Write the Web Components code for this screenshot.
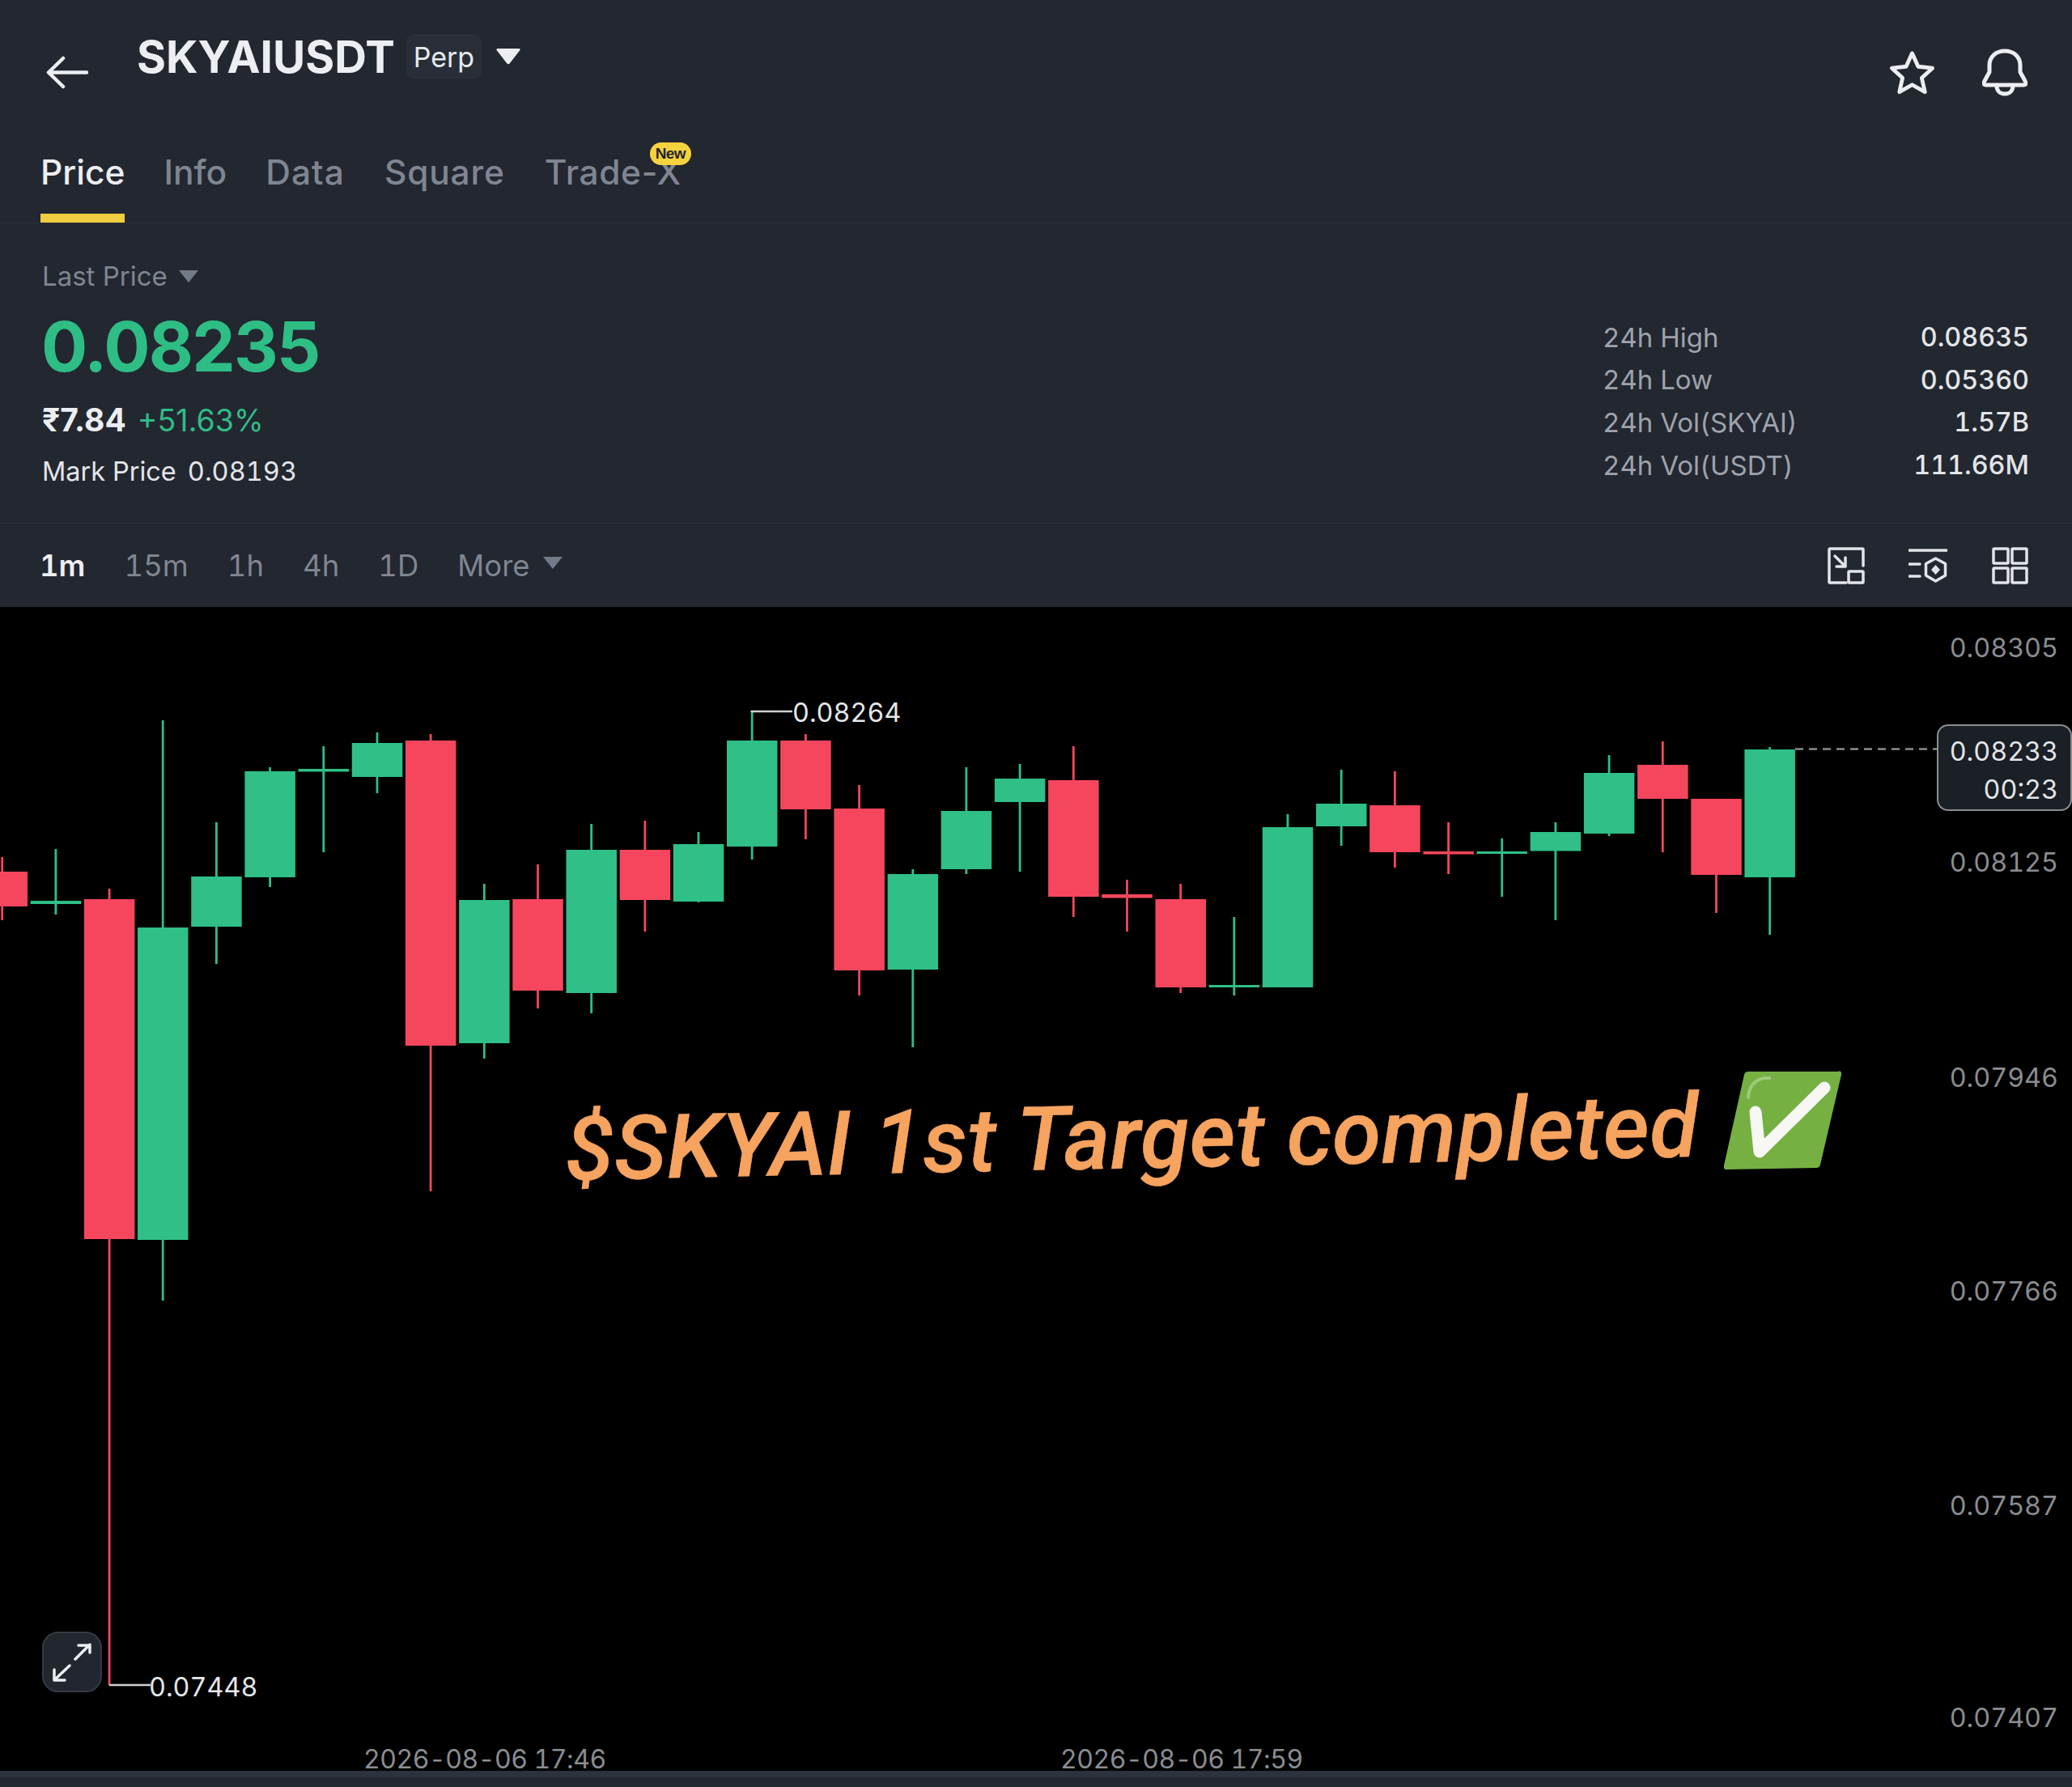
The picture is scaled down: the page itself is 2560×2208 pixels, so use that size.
<!DOCTYPE html>
<html lang="en">
<head>
<meta charset="utf-8">
<title>SKYAIUSDT Perp</title>
<style>
  html, body { margin: 0; padding: 0; background: #232730; }
  body { width: 2560px; height: 2208px; overflow: hidden; display: flex; flex-direction: column; font-family: Inter, "Liberation Sans", sans-serif; color: #eaecef; }
</style>
</head>
<body>
<top-bar></top-bar>
<tab-bar></tab-bar>
<price-panel></price-panel>
<time-bar></time-bar>
<k-chart></k-chart>
<bottom-strip></bottom-strip>
<script>
function def(name, html) {
  customElements.define(name, class extends HTMLElement {
    constructor() {
      super();
      this.attachShadow({ mode: 'open' }).innerHTML = typeof html === 'function' ? html() : html;
    }
  });
}

def('top-bar', `<style>
  :host { display: flex; height: 160px; flex: none; align-items: flex-start; padding: 0 55px 0 57px; box-sizing: border-box; }
  svg { display: block; fill: none; stroke: #eceef1; stroke-linecap: round; stroke-linejoin: round; }
  .back { margin-top: 69px; margin-right: 60px; }
  h1 { margin: 42px 14px 0 0; font: 700 55px/56px Inter, sans-serif; color: #eceef1; letter-spacing: 0; }
  .perp { margin-top: 43px; padding-top: 2px; height: 54px; width: 93px; box-sizing: border-box; display: flex; align-items: center; justify-content: center; border-radius: 9px; background: #282d37; border: 1px solid #2f343e; font: 400 34px/1 Inter, sans-serif; color: #e6e8eb; }
  .tri { margin: 60px 0 0 18px; }
  .acts { margin-left: auto; display: flex; gap: 58px; align-items: flex-start; }
  .star { margin-top: 62px; }
  .bell { margin-top: 60px; }
</style>
<svg class="back" width="52" height="42" viewBox="0 0 52 42" stroke-width="4.500"><path d="M50 20.500H3M21 3 3 20.500 21 38"/></svg>
<h1>SKYAIUSDT</h1>
<div class="perp">Perp</div>
<svg class="tri" width="30" height="20" viewBox="0 0 30 20" style="stroke:none"><path fill="#eceef1" d="M2 0H28Q30.500 0 29 2.500L17 18Q15 20.500 13 18L1 2.500Q-.5 0 2 0Z"/></svg>
<div class="acts">
<svg class="star" width="57" height="55" viewBox="0 0 59 57" stroke-width="5"><path d="M29.500 4 37.200 21 55.500 23 41.800 35.500 45.800 53.500 29.500 44.300 13.200 53.500 17.200 35.500 3.500 23 21.800 21Z"/></svg>
<svg class="bell" width="56" height="60" viewBox="0 0 56 60" stroke-width="5"><path d="M9 29V21C9 10 17 3 28 3S47 10 47 21V29L53 40Q55.500 45 51 45H5Q.5 45 3 40Z"/><path d="M18 46C18 52 22 56 28 56S38 52 38 46"/></svg>
</div>`);

def('tab-bar', `<style>
  :host { display: flex; height: 116px; flex: none; gap: 48px; padding-left: 50px; box-sizing: border-box; border-bottom: 1px solid #2c3039; align-items: stretch; }
  .t { position: relative; height: 104px; padding-top: 27px; box-sizing: border-box; font: 500 42.500px/52px Inter, sans-serif; color: #7f8691; }
  .on { color: #eceef1; }
  .on::after { content: ""; position: absolute; left: 0; right: 0; bottom: -11px; height: 11px; background: #f0cc3f; }
  .w1 { letter-spacing: 1px; }
  .w2 { letter-spacing: .8px; margin-left: 1px; }
  .w3 { letter-spacing: .6px; margin-left: 1px; }
  .new { position: absolute; right: -12px; top: 16px; width: 51px; height: 28px; border-radius: 14px; background: #f6d23f; color: #23262c; font: 600 19px/28px "Liberation Sans", sans-serif; text-align: center; letter-spacing: -0.6px; }
</style>
<div class="t on">Price</div><div class="t">Info</div><div class="t w1">Data</div><div class="t w2">Square</div>
<div class="t w3">Trade-X<span class="new">New</span></div>`);

def('price-panel', `<style>
  :host { display: flex; height: 371px; flex: none; justify-content: space-between; box-sizing: border-box; padding: 0 53px 0 52px; border-bottom: 1px solid #2c3039; }
  .l { display: flex; flex-direction: column; align-items: flex-start; }
  .lp { margin-top: 45px; display: flex; align-items: center; gap: 14px; font: 400 33px/40px Inter, sans-serif; color: #7f8691; }
  .big { margin: 16px 0 0 -1px; font: 700 85px/104px Inter, sans-serif; color: #2ebd85; letter-spacing: -1.800px; }
  .sub { margin-top: 15px; display: flex; align-items: baseline; gap: 14px; font: 400 37.500px/46px Inter, sans-serif; color: #2ebd85; }
  .sub b { font-weight: 700; font-size: 39px; color: #eceef1; }
  .mark { margin-top: 20px; display: flex; gap: 14px; font: 400 32.500px/40px Inter, sans-serif; color: #e3e5e8; font-variant-numeric: tabular-nums; }
  .r { margin-top: 115px; display: grid; grid-template-columns: 1fr auto; width: 527px; grid-auto-rows: 52.600px; align-items: center; font: 400 33px/1 Inter, sans-serif; color: #9ea3ab; font-variant-numeric: tabular-nums; }
  .r span:nth-child(even) { text-align: right; color: #e3e5e8; font-weight: 500; font-size: 32.300px; }
</style>
<div class="l">
  <div class="lp">Last Price <svg width="24" height="15" viewBox="0 0 24 15"><path fill="#747b88" d="M0 0H24L12 15Z"/></svg></div>
  <div class="big">0.08235</div>
  <div class="sub"><b>₹7.84</b><span>+51.63%</span></div>
  <div class="mark"><span>Mark Price</span><span>0.08193</span></div>
</div>
<div class="r">
  <span>24h High</span><span>0.08635</span>
  <span>24h Low</span><span>0.05360</span>
  <span>24h Vol(SKYAI)</span><span>1.57B</span>
  <span>24h Vol(USDT)</span><span>111.66M</span>
</div>`);

def('time-bar', `<style>
  :host { display: flex; height: 103px; flex: none; box-sizing: border-box; padding: 2px 54px 0 49px; align-items: center; font: 400 36.500px/1 Inter, sans-serif; color: #7f8691; font-variant-numeric: tabular-nums; }
  .f { display: flex; gap: 48px; align-items: center; }
  .on { color: #eceef1; font-weight: 600; }
  .more { display: flex; align-items: center; gap: 16px; }
  .more svg { margin-top: -8px; }
  .ic { margin-left: auto; display: flex; align-items: center; margin-top: -2px; }
  .ic svg { display: block; fill: none; stroke: #e2e4e8; stroke-width: 3.500; stroke-linejoin: round; stroke-linecap: round; }
  .i2 { margin-left: 54px; margin-right: 55px; }
</style>
<div class="f"><span class="on">1m</span><span>15m</span><span>1h</span><span>4h</span><span>1D</span>
<span class="more">More <svg width="24" height="15" viewBox="0 0 24 15"><path fill="#747b88" d="M0 0H24L12 15Z"/></svg></span></div>
<div class="ic">
<svg width="46" height="46" viewBox="0 0 46 46"><path d="M23 44H3Q2 44 2 43V3Q2 2 3 2H43Q44 2 44 3V23"/><rect x="26" y="30" width="18" height="14" rx="1"/><path d="M9 11 22 24M22 13V24H11"/></svg>
<svg class="i2" width="48" height="42" viewBox="0 0 48 42"><path d="M1 2H47M1 19H14M1 34H14"/><path d="M33.500 12 45.500 18.500V33L33.500 40 21.500 33V18.500Z"/><path fill="#e2e4e8" stroke="none" d="M33.500 20 39 26 33.500 32 28 26Z"/></svg>
<svg width="45" height="46" viewBox="0 0 45 46"><rect x="2" y="2" width="18" height="18" rx="1"/><rect x="25" y="2" width="18" height="18" rx="1"/><rect x="2" y="26" width="18" height="18" rx="1"/><rect x="25" y="26" width="18" height="18" rx="1"/></svg>
</div>`);

const G = '#2fbf87', R = '#f6465d';
const C = [
 [R,1078,1121,1060,1138],[G,1114,1118,1050,1131],[R,1112,1532,1099,2083],[G,1147,1533,891,1608],
 [G,1084,1146,1017,1192],[G,954,1085,949,1097],[G,951,954.500,923,1054],[G,919,961,906,981],
 [R,916,1293,908,1473],[G,1113,1290,1093,1309],[R,1112,1225,1069,1247],[G,1051,1228,1019,1253],
 [R,1051,1113,1015,1152],[G,1044,1115,1029,1116],[G,916,1047,881,1063],[R,916,1001,908,1038],
 [R,1000,1200,971,1231],[G,1081,1199,1075,1295],[G,1003,1075,949,1081],[G,963,992,945,1078],
 [R,965,1109,923,1134],[R,1106,1110.500,1088,1152],[R,1112,1221,1093,1228],[G,1218,1221,1134,1231],
 [G,1023,1221,1007,1221],[G,994,1022,952,1046],[R,996,1054,954,1073],[R,1053,1056.500,1017,1081],
 [G,1053,1056,1037,1109],[G,1029,1052.500,1017,1138],[G,956,1031,934,1034],[R,946,988,917,1054],
 [R,988,1082,988,1129],[G,927,1085,924,1156]
];
function candles() {
  return C.map((c, i) => {
    const x = 2.7 + 66.18 * i;
    return `<rect x="${(x-1.4).toFixed(1)}" y="${c[3]}" width="2.800" height="${c[4]-c[3]}" fill="${c[0]}"/>` +
           `<rect x="${(x-31.2).toFixed(1)}" y="${c[1]}" width="62.500" height="${c[2]-c[1]}" fill="${c[0]}"/>`;
  }).join('');
}

const axis = [['0.08305',802],['0.08125',1067],['0.07946',1333],['0.07766',1597],['0.07587',1862],['0.07407',2124]];

def('k-chart', () => `<style>
  :host { display: block; position: relative; height: 1438px; flex: none; background: #000; font: 400 32.300px/1 Inter, sans-serif; color: #8a8d91; font-variant-numeric: tabular-nums; }
  svg.plot { position: absolute; left: 0; top: 0; }
  .lab { position: absolute; white-space: nowrap; transform: translateY(-50%); }
  .ax { right: 17px; }
  .mk { color: #e6e7e9; }
  .date { top: 1407px; font-size: 32px; letter-spacing: -0.5px; line-height: 34px; transform: none; }
  .tag { position: absolute; left: 2393px; top: 145px; width: 167px; height: 107px; box-sizing: border-box; border: 2px solid #8a8d91; border-radius: 14px; background: #1b1f26; color: #e3e5e8; padding: 8px 15px 0 0; text-align: right; line-height: 47px; }
  .exp { position: absolute; left: 52px; top: 1266px; width: 74px; height: 75px; box-sizing: border-box; border: 2px solid #353a43; border-radius: 20px; background: #22262e; }
  .exp svg { position: absolute; left: -2px; top: -2px; fill: none; stroke: #eceef1; stroke-width: 3.500; stroke-linecap: round; stroke-linejoin: round; }
  .msg { position: absolute; left: 699px; top: 616px; white-space: nowrap; font: italic 500 110px/1 Roboto, "Liberation Sans", sans-serif; letter-spacing: .25px; color: #f6a35f; -webkit-text-stroke: .5px #f6a35f; transform-origin: 0 100%; transform: rotate(-1.200deg); }
</style>
<svg class="plot" width="2560" height="1438" viewBox="0 751 2560 1438">
  ${candles()}
  <path d="M928.700 881V880H979M135 2083H186" fill="none" stroke="#cfd1d4" stroke-width="2.500"/>
  <path d="M2218 926.500H2393" stroke="#8a8d91" stroke-width="2.500" stroke-dasharray="10 7" fill="none"/>
  <path fill="#76b043" d="M2160 1325H2270Q2276 1323 2275 1329L2249 1440Q2248 1444 2244 1444L2134 1446Q2129 1447 2130 1441L2155 1329Q2156 1325 2160 1325Z"/>
  <path fill="none" stroke="#9ccb7c" stroke-width="4" stroke-linecap="round" d="M2160 1357C2161 1340 2172 1332 2186 1333"/>
  <path fill="none" stroke="#f7f7f4" stroke-width="15" stroke-linecap="round" stroke-linejoin="round" d="M2169 1375 2174 1424 2254 1345"/>
</svg>
${axis.map(a => `<span class="lab ax" style="top:${a[1]-751}px">${a[0]}</span>`).join('')}
<div class="tag">0.08233<br>00:23</div>
<span class="lab mk" style="left:979px;top:131px">0.08264</span>
<span class="lab mk" style="left:184px;top:1335px">0.07448</span>
<span class="lab date" style="left:449px">2026-08-06 17:46</span>
<span class="lab date" style="left:1310px">2026-08-06 17:59</span>
<div class="exp"><svg width="74" height="75" viewBox="52 2017 74 75"><path d="M93 2051 111 2033M97 2034H111V2043M86 2059 67 2077M67 2064V2077H80"/></svg></div>
<div class="msg">$SKYAI 1st Target completed</div>`);

def('bottom-strip', `<style>
  :host { display: block; height: 19px; flex: none; background: #232830; border-top: 8px solid #2d333e; box-sizing: border-box; }
</style>`);
</script>
</body>
</html>
